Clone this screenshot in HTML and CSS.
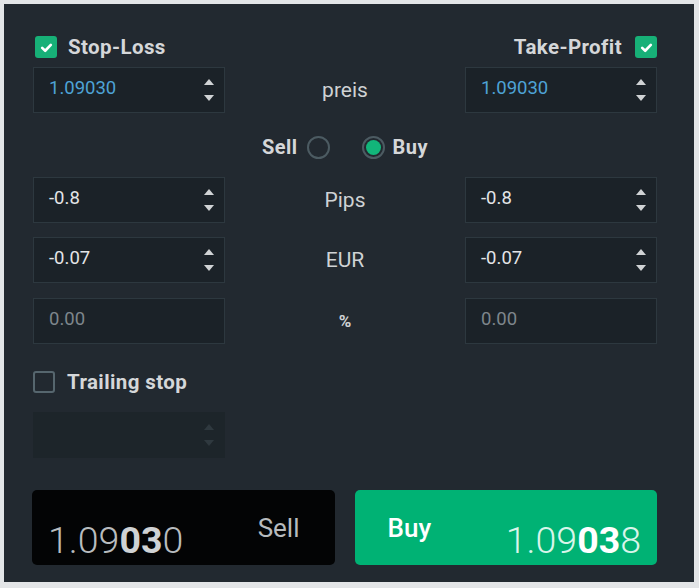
FILE: index.html
```html
<!DOCTYPE html>
<html lang="de">
<head>
<meta charset="utf-8">
<title>Order</title>
<link rel="stylesheet" href="styles.css">
</head>
<body>
<div class="panel">
  <div class="head-row">
    <label class="check">
      <span class="box on"><svg viewBox="0 0 12 12" width="13" height="13"><path d="M2 6.3 L4.8 9 L10 3.6" fill="none" stroke="#fff" stroke-width="2.4" stroke-linecap="round" stroke-linejoin="round"/></svg></span>
      <span class="check-label">Stop-Loss</span>
    </label>
    <label class="check">
      <span class="check-label">Take-Profit</span>
      <span class="box on"><svg viewBox="0 0 12 12" width="13" height="13"><path d="M2 6.3 L4.8 9 L10 3.6" fill="none" stroke="#fff" stroke-width="2.4" stroke-linecap="round" stroke-linejoin="round"/></svg></span>
    </label>
  </div>

  <div class="row row-price">
    <div class="field"><span class="val blue">1.09030</span><span class="spin"><i class="up"></i><i class="down"></i></span></div>
    <div class="mid">preis</div>
    <div class="field"><span class="val blue">1.09030</span><span class="spin"><i class="up"></i><i class="down"></i></span></div>
  </div>

  <div class="radio-row">
    <span class="radio-label">Sell</span><span class="radio"></span>
    <span class="radio on"><span class="dot"></span></span><span class="radio-label">Buy</span>
  </div>

  <div class="row row-pips">
    <div class="field"><span class="val">-0.8</span><span class="spin"><i class="up"></i><i class="down"></i></span></div>
    <div class="mid">Pips</div>
    <div class="field"><span class="val">-0.8</span><span class="spin"><i class="up"></i><i class="down"></i></span></div>
  </div>

  <div class="row row-eur">
    <div class="field"><span class="val">-0.07</span><span class="spin"><i class="up"></i><i class="down"></i></span></div>
    <div class="mid">EUR</div>
    <div class="field"><span class="val">-0.07</span><span class="spin"><i class="up"></i><i class="down"></i></span></div>
  </div>

  <div class="row row-pct">
    <div class="field"><span class="val dim">0.00</span></div>
    <div class="mid bold">%</div>
    <div class="field"><span class="val dim">0.00</span></div>
  </div>

  <label class="check trailing">
    <span class="box"></span>
    <span class="check-label">Trailing stop</span>
  </label>

  <div class="field disabled"><span class="val"></span><span class="spin"><i class="up"></i><i class="down"></i></span></div>

  <div class="actions">
    <div class="btn sell">
      <span class="price">1.09<b>03</b>0</span>
      <span class="btn-label">Sell</span>
    </div>
    <div class="btn buy">
      <span class="btn-label">Buy</span>
      <span class="price">1.09<b>03</b>8</span>
    </div>
  </div>
</div>
</body>
</html>
```

FILE: styles.css
```css
html, body {
  margin: 0;
  padding: 0;
}
body {
  background: #e3e5e7;
  font-family: Roboto, "Liberation Sans", Arial, sans-serif;
  color: #d3d5d7;
}
.panel {
  margin: 4px;
  width: 690px;
  height: 578px;
  box-sizing: border-box;
  background: #222930;
  padding: 32px 37px 0 29px;
}
.head-row {
  display: flex;
  justify-content: space-between;
  height: 22px;
}
.check {
  display: flex;
  align-items: center;
  gap: 11px;
}
.box {
  width: 22px;
  height: 22px;
  box-sizing: border-box;
  border-radius: 3px;
  border: 2px solid #56666e;
  display: flex;
  align-items: center;
  justify-content: center;
}
.box.on {
  border: none;
  background: #17b077;
}
.head-row .box { margin-left: 2px; }
.check-label {
  font-weight: 700;
  font-size: 20.5px;
  letter-spacing: 0.4px;
  color: #d5d7d9;
}
.row {
  display: grid;
  grid-template-columns: 192px 1fr 192px;
  height: 46px;
}
.row-price { margin-top: 9px; }
.row-pips { margin-top: 19px; }
.row-eur { margin-top: 14px; }
.row-pct { margin-top: 15px; }
.field {
  box-sizing: border-box;
  height: 46px;
  width: 192px;
  background: #1b2228;
  border: 1px solid #2d383f;
  display: flex;
  align-items: center;
  padding: 0 10px 0 15px;
}
.val {
  flex: 1;
  font-size: 18.5px;
  color: #e3e5e7;
  margin-top: -5px;
}
.val.blue { color: #4ea3d6; }
.val.dim { color: #7e868c; }
.spin {
  display: flex;
  flex-direction: column;
  gap: 10px;
  align-items: center;
  margin-top: -1px;
}
.spin i {
  display: block;
  width: 0;
  height: 0;
  border-left: 5px solid transparent;
  border-right: 5px solid transparent;
}
.spin .up { border-bottom: 6px solid #d0d3d5; }
.spin .down { border-top: 6px solid #d0d3d5; }
.mid {
  display: flex;
  align-items: center;
  justify-content: center;
  font-size: 21px;
  color: #cfd2d4;
  margin-top: -1px;
}
.mid.bold { font-weight: 700; font-size: 17px; }
.radio-row {
  margin-top: 23px;
  height: 22px;
  display: flex;
  align-items: center;
  justify-content: center;
}
.radio-label {
  font-weight: 700;
  font-size: 20px;
  letter-spacing: 0.5px;
  color: #d5d7d9;
}
.radio {
  width: 23px;
  height: 23px;
  box-sizing: border-box;
  border-radius: 50%;
  border: 2px solid #4c5b62;
  display: flex;
  align-items: center;
  justify-content: center;
  margin-left: 9px;
}
.radio.on {
  margin-left: 32px;
  margin-right: 8px;
}
.radio .dot {
  width: 15px;
  height: 15px;
  border-radius: 50%;
  background: #12b57a;
}
.trailing {
  margin-top: 27px;
  height: 22px;
}
.trailing .check-label { margin-left: 1px; }
.field.disabled {
  margin-top: 19px;
  background: #1d252a;
  border-color: #1d252a;
}
.field.disabled .up { border-bottom-color: #2f393f; }
.field.disabled .down { border-top-color: #2f393f; }
.actions {
  margin-top: 32px;
  margin-left: -1px;
  display: flex;
  gap: 20px;
}
.btn {
  width: 304px;
  height: 75px;
  box-sizing: border-box;
  border-radius: 5px;
  display: flex;
  align-items: flex-end;
  justify-content: space-between;
  padding-bottom: 6px;
}
.btn.sell {
  background: #030405;
  padding-left: 16px;
  padding-right: 35px;
}
.btn.buy {
  background: #00b274;
  padding-left: 33px;
  padding-right: 16px;
}
.price {
  font-size: 37.5px;
  line-height: 1;
  font-weight: 300;
}
.price b { font-weight: 700; }
.sell .price { color: #b8bcbf; }
.sell .price b { color: #cfd2d4; }
.buy .price { color: #d9f5ea; }
.buy .price b { color: #ffffff; }
.btn-label {
  font-size: 26px;
  line-height: 1;
}
.sell .btn-label { color: #b7bbbe; font-weight: 400; margin-bottom: 18px; }
.buy .btn-label { color: #ffffff; font-weight: 500; margin-bottom: 18px; }
```
